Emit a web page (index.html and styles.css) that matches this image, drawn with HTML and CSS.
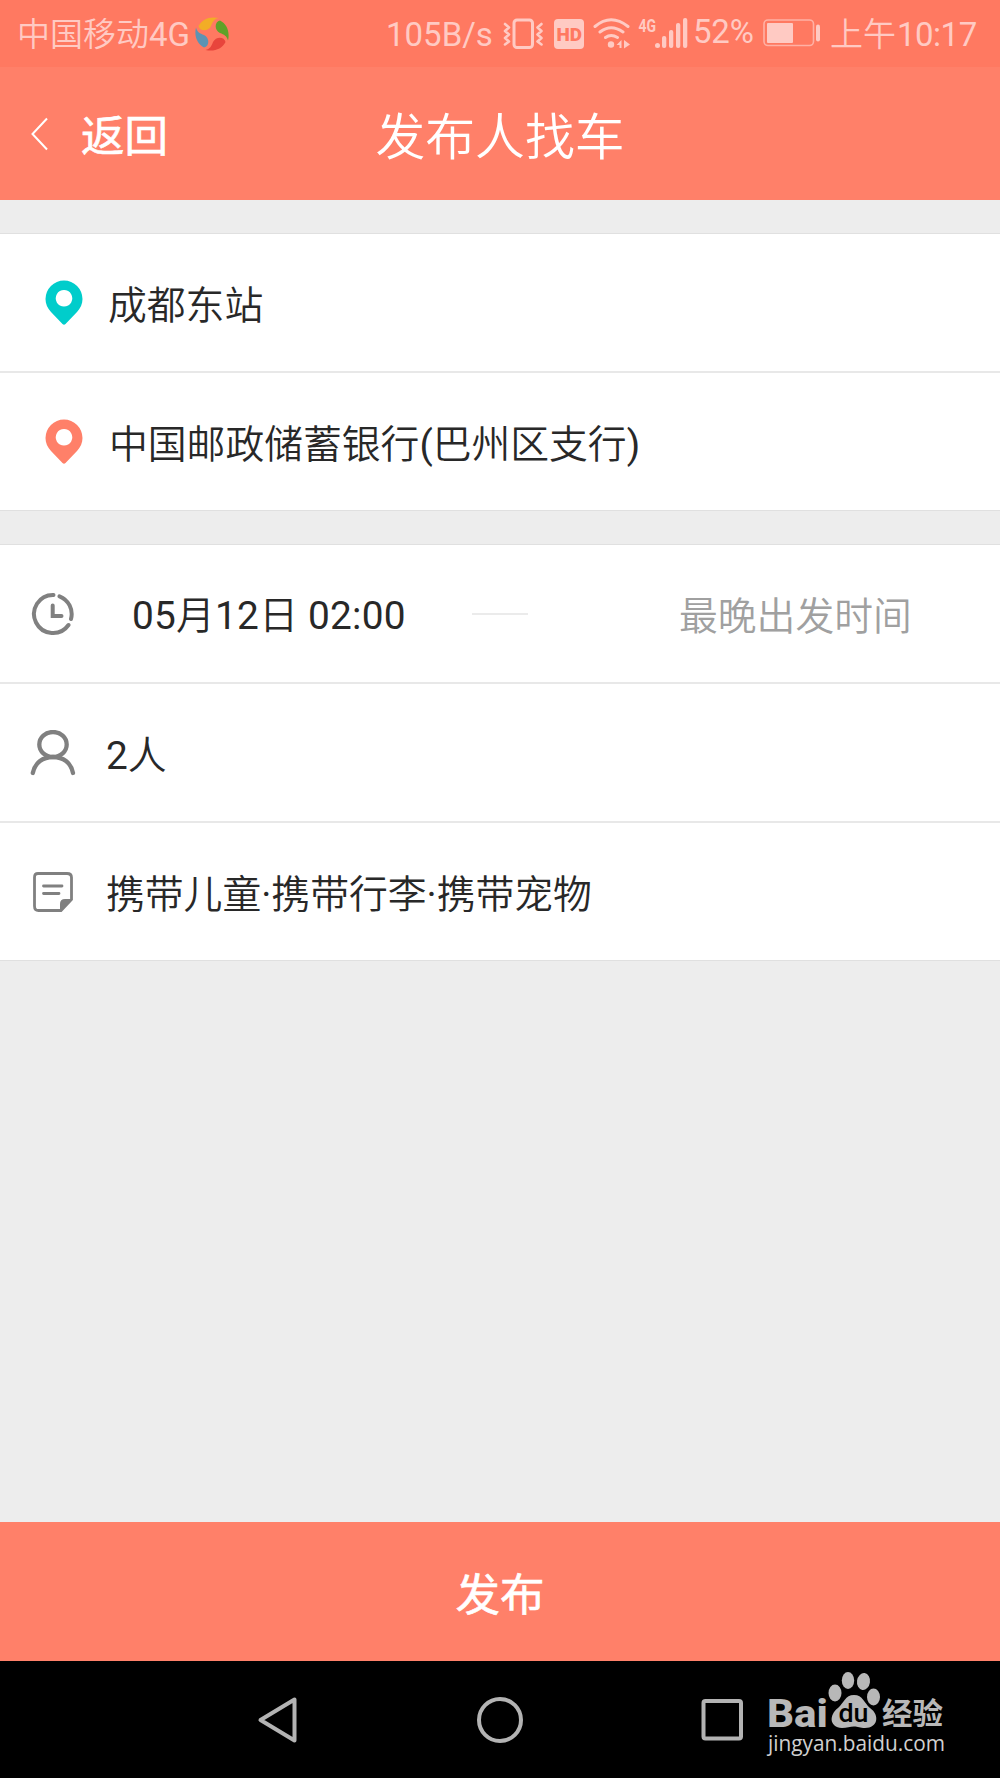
FILE: index.html
```html
<!DOCTYPE html>
<html lang="zh-CN">
<head>
<meta charset="utf-8">
<title>发布人找车</title>
<link rel="stylesheet" href="styles.css">
</head>
<body>
<div class="screen">
  <div class="status">
    <span class="carrier">中国移动<span class="latin">4G</span></span>
    <svg class="swirl" width="34" height="34" viewBox="0 0 34 34">
      <path fill="#f2ad26" d="M3.500 9C7 2 15-1 23.500 1C19 2 17.500 5 16 9C13 15 4.500 14.500 3.500 9Z"/>
      <path fill="#60a228" d="M25 3.500C32 7 35 15 33 23.500C32 19 29 17.500 25 16C19 13 19.500 4.500 25 3.500Z"/>
      <path fill="#e8453c" d="M30.500 25C27 32 19 35 10.500 33C15 32 16.500 29 18 25C21 19 29.500 19.500 30.500 25Z"/>
      <path fill="#5d93b3" d="M9 30.500C2 27-1 19 1 10.500C2 15 5 16.500 9 18C15 21 14.500 29.500 9 30.500Z"/>
    </svg>
    <span class="speed">105B/s</span>
    <svg class="indicators" width="186" height="36" viewBox="502 15 186 36">
      <g fill="none" stroke="#ffcac3" stroke-width="3" stroke-linejoin="round" stroke-linecap="round">
        <rect x="514" y="20" width="18.500" height="27.500" rx="3"/>
        <path stroke-width="2.600" d="M505 24l4 3.500-4 3.500 4 3.500-4 3.500 4 3.500-4 3M541.500 24l-4 3.500 4 3.500-4 3.500 4 3.500-4 3.500 4 3"/>
        <path d="M595 26.500Q611 13 628 26.500M600 32Q611 23.500 623 32M605.500 37.500Q611 33.500 617.500 37.500"/>
      </g>
      <rect x="554" y="19" width="30" height="30" rx="4" fill="#ffcac3"/>
      <text class="hd" x="556.500" y="41" textLength="25.500" lengthAdjust="spacingAndGlyphs">HD</text>
      <g fill="#ffcac3">
        <circle cx="611" cy="44.500" r="3.200"/>
        <path d="M616.500 45l5-5v8h-2v-3zM624 40l6 4.500-6 4z"/>
        <circle cx="657.500" cy="45.500" r="2.500"/>
        <rect x="662" y="36" width="4.300" height="12" rx="2"/>
        <rect x="669" y="30" width="4.300" height="18" rx="2"/>
        <rect x="676" y="23" width="4.300" height="25" rx="2"/>
        <rect x="683" y="18" width="4.300" height="30" rx="2"/>
      </g>
      <text class="net" x="638.500" y="32" textLength="17.500" lengthAdjust="spacingAndGlyphs">4G</text>
    </svg>
    <span class="percent">52%</span>
    <svg class="battery" width="58" height="28" viewBox="762 19 58 28">
      <rect x="763" y="20" width="49.500" height="25.500" rx="4" fill="none" stroke="#ffb1a5" stroke-width="1.600"/>
      <rect x="766" y="23" width="26" height="20" rx="1" fill="#ffcac3"/>
      <rect x="815" y="24.500" width="4" height="17" rx="2" fill="#ffcac3"/>
    </svg>
    <span class="clock">上午<span class="digits">10:17</span></span>
  </div>

  <header class="header">
    <a class="back">
      <svg width="18" height="34" viewBox="0 0 18 34"><path d="M16 1.500L1.500 17L16 32.500" fill="none" stroke="#fff" stroke-width="2"/></svg>
      <span>返回</span>
    </a>
    <h1 class="title">发布人找车</h1>
  </header>

  <main class="content">
    <section class="group">
      <div class="row place">
        <svg class="pin start" width="38" height="46" viewBox="0 0 38 46"><path fill="currentColor" fill-rule="evenodd" d="M19 .500A18.500 18.500 0 0 1 37.500 19C37.500 24 35.500 28 32 32L20.500 44Q19 45.500 17.500 44L6 32C2.500 28 .500 24 .500 19A18.500 18.500 0 0 1 19 .500ZM19 10a8.300 8.300 0 1 0 .010 0Z"/></svg>
        <span class="label">成都东站</span>
      </div>
      <div class="row place">
        <svg class="pin end" width="38" height="46" viewBox="0 0 38 46"><path fill="currentColor" fill-rule="evenodd" d="M19 .500A18.500 18.500 0 0 1 37.500 19C37.500 24 35.500 28 32 32L20.500 44Q19 45.500 17.500 44L6 32C2.500 28 .500 24 .500 19A18.500 18.500 0 0 1 19 .500ZM19 10a8.300 8.300 0 1 0 .010 0Z"/></svg>
        <span class="label address">中国邮政储蓄银行<span class="latin">(</span>巴州区支行<span class="latin">)</span></span>
      </div>
    </section>

    <section class="group">
      <div class="row">
        <svg class="icon" width="46" height="46" viewBox="0 0 46 46" fill="none" stroke="#808080" stroke-width="4" stroke-linecap="round" stroke-linejoin="round"><path d="M23.500 4A19 19 0 1 0 38.500 34M29.500 5.300A19 19 0 0 1 41 28"/><path d="M22.700 14.500V25H31.500" stroke-linejoin="miter"/></svg>
        <span class="label depart"><span class="latin">05</span>月<span class="latin">12</span>日<span class="latin"> 02:00</span></span>
        <span class="dash"></span>
        <span class="label latest">最晚出发时间</span>
      </div>
      <div class="row">
        <svg class="icon" width="46" height="46" viewBox="0 0 46 46" fill="none" stroke="#808080" stroke-width="4.300" stroke-linecap="round"><ellipse cx="23" cy="14.500" rx="13.700" ry="12.500"/><path d="M2.800 43C5 32.500 13 27 23 27S41 32.500 43 43"/></svg>
        <span class="label"><span class="latin">2</span>人</span>
      </div>
      <div class="row">
        <svg class="icon" width="46" height="46" viewBox="0 0 46 46" fill="none" stroke="#808080" stroke-width="2.800" stroke-linecap="round"><path d="M8 4.500H37Q41.500 4.500 41.500 8.500V30.500L31 41.500H8.500Q4.500 41.500 4.500 37V8.500Q4.500 4.500 8 4.500Z"/><path d="M13.500 17H32M13.500 24.500H29"/><path fill="#808080" stroke="none" d="M30 42V35Q30 30 35 30H42Z"/></svg>
        <span class="label">携带儿童<span class="latin">·</span>携带行李<span class="latin">·</span>携带宠物</span>
      </div>
    </section>
  </main>

  <button class="publish">发布</button>

  <nav class="navbar">
    <svg width="44" height="50" viewBox="0 0 44 50"><path d="M39.500 4.500V45.500L5.500 25Z" fill="none" stroke="#b3b3b3" stroke-width="4" stroke-linejoin="round"/></svg>
    <svg width="48" height="50" viewBox="0 0 48 50"><circle cx="24" cy="25" r="21" fill="none" stroke="#b3b3b3" stroke-width="4"/></svg>
    <svg width="44" height="50" viewBox="0 0 44 50"><rect x="2.500" y="6" width="37.500" height="37.500" rx="2" fill="none" stroke="#b3b3b3" stroke-width="4"/></svg>
    <svg class="watermark" width="196" height="100" viewBox="760 1670 196 100">
      <g fill="#b8b8b8">
        <ellipse cx="835" cy="1693" rx="6.500" ry="8.500"/>
        <ellipse cx="848" cy="1680.500" rx="6.200" ry="8.500"/>
        <ellipse cx="863.500" cy="1681.500" rx="6.500" ry="8.500" transform="rotate(8 863.500 1681.500)"/>
        <ellipse cx="873.500" cy="1697" rx="6.500" ry="8.500"/>
        <path d="M854 1695C863 1695 864 1703 870 1708C880 1715 878 1728 865 1728C860 1728 858 1726.500 854 1726.500S847 1728 842 1728C829 1727 829 1715 838 1708C844 1703 845 1695 854 1695Z"/>
        <text class="wm-bai" x="767" y="1726.500" textLength="61" lengthAdjust="spacingAndGlyphs">Bai</text>
        <text class="wm-cn" x="882" y="1723.500" textLength="61" lengthAdjust="spacingAndGlyphs">经验</text>
      </g>
      <text class="wm-du" x="838.500" y="1722" textLength="30" lengthAdjust="spacingAndGlyphs">du</text>
      <text class="wm-url" x="768" y="1750.500" textLength="177" lengthAdjust="spacingAndGlyphs">jingyan.baidu.com</text>
    </svg>
  </nav>
</div>
</body>
</html>
```
FILE: styles.css
```css
* { box-sizing: border-box; }

body {
  margin: 0;
  font-family: Roboto, "Noto Sans CJK SC", sans-serif;
  color: #282828;
}

svg { display: block; flex: none; }

.screen {
  width: 1000px;
  height: 1778px;
  display: flex;
  flex-direction: column;
  background: #ededed;
}

.status {
  height: 67px;
  flex: none;
  display: flex;
  align-items: flex-start;
  padding-left: 17px;
  background: #ff7961;
  color: #ffcac3;
  font-size: 33px;
  line-height: 67px;
  font-weight: 350;
  white-space: nowrap;
}

.latin { font-weight: 400; white-space: pre; }

.carrier { width: 178px; }
.swirl { margin-top: 17px; }
.speed { width: 116px; margin-left: 157px; font-weight: 400; }
.carrier, .speed, .clock { padding-top: 1px; }
.indicators { margin-top: 15px; }
.percent { width: 71px; margin-left: 5px; line-height: 64px; font-weight: 400; letter-spacing: -.200px; }
.battery { margin-top: 19px; margin-left: -1px; }
.clock { margin-left: 9px; }
.digits { font-weight: 400; letter-spacing: -.500px; margin-left: 1px; }

.hd { font: 900 19px Roboto, sans-serif; fill: #ff7961; }
.net { font: 700 18px Roboto, sans-serif; fill: #ffcac3; }

.header {
  height: 133px;
  flex: none;
  display: grid;
  grid-template-columns: 1fr auto 1fr;
  align-items: center;
  background: #ff8069;
  color: #fff;
}

.back {
  display: flex;
  align-items: center;
  gap: 32px;
  padding-left: 31px;
  font-size: 43.500px;
  font-weight: 400;
  -webkit-text-stroke: .600px #fff;
}

.title {
  margin: 0;
  padding-bottom: 1px;
  font-size: 49.800px;
  font-weight: 350;
}

.content { flex: 1; }

.group {
  margin-top: 33px;
  border-top: 1px solid #e0e0e0;
  border-bottom: 1px solid #e0e0e0;
  background: #fff;
}

.row {
  height: 137px;
  display: flex;
  align-items: center;
  padding-left: 30px;
  font-size: 38.800px;
  font-weight: 350;
  white-space: nowrap;
}

.row + .row {
  height: 139px;
  border-top: 2px solid #e8e8e8;
}

.label { padding-bottom: 2px; }
.icon { margin-right: 30px; }
.place { padding-left: 45px; }
.pin { margin-right: 25px; }
.start { color: #00cdcb; }
.end { color: #ff8069; }
.address { padding-left: 1px; }
.depart { width: 366px; padding-left: 26px; padding-bottom: 3px; letter-spacing: .220px; }
.dash { width: 56px; height: 2px; margin-right: 150px; background: #ebebeb; }
.latest { color: #a0a0a0; padding-left: 1px; }

.publish {
  height: 139px;
  flex: none;
  border: 0;
  padding: 0;
  background: #ff8069;
  color: #fff;
  font: 400 44.500px Roboto, "Noto Sans CJK SC", sans-serif;
  -webkit-text-stroke: .600px #fff;
}

.navbar {
  position: relative;
  height: 117px;
  flex: none;
  display: flex;
  align-items: center;
  gap: 177px;
  padding-left: 255px;
  background: #000;
}

.watermark { position: absolute; left: 760px; top: 9px; }

.wm-bai { font: 800 39px Roboto, sans-serif; }
.wm-cn { font: 700 30px "Noto Sans CJK SC", sans-serif; }
.wm-du { font: 500 25px Roboto, sans-serif; fill: #000; }
.wm-url { font: 400 22px "Open Sans", sans-serif; fill: #d0d0d0; }
```
